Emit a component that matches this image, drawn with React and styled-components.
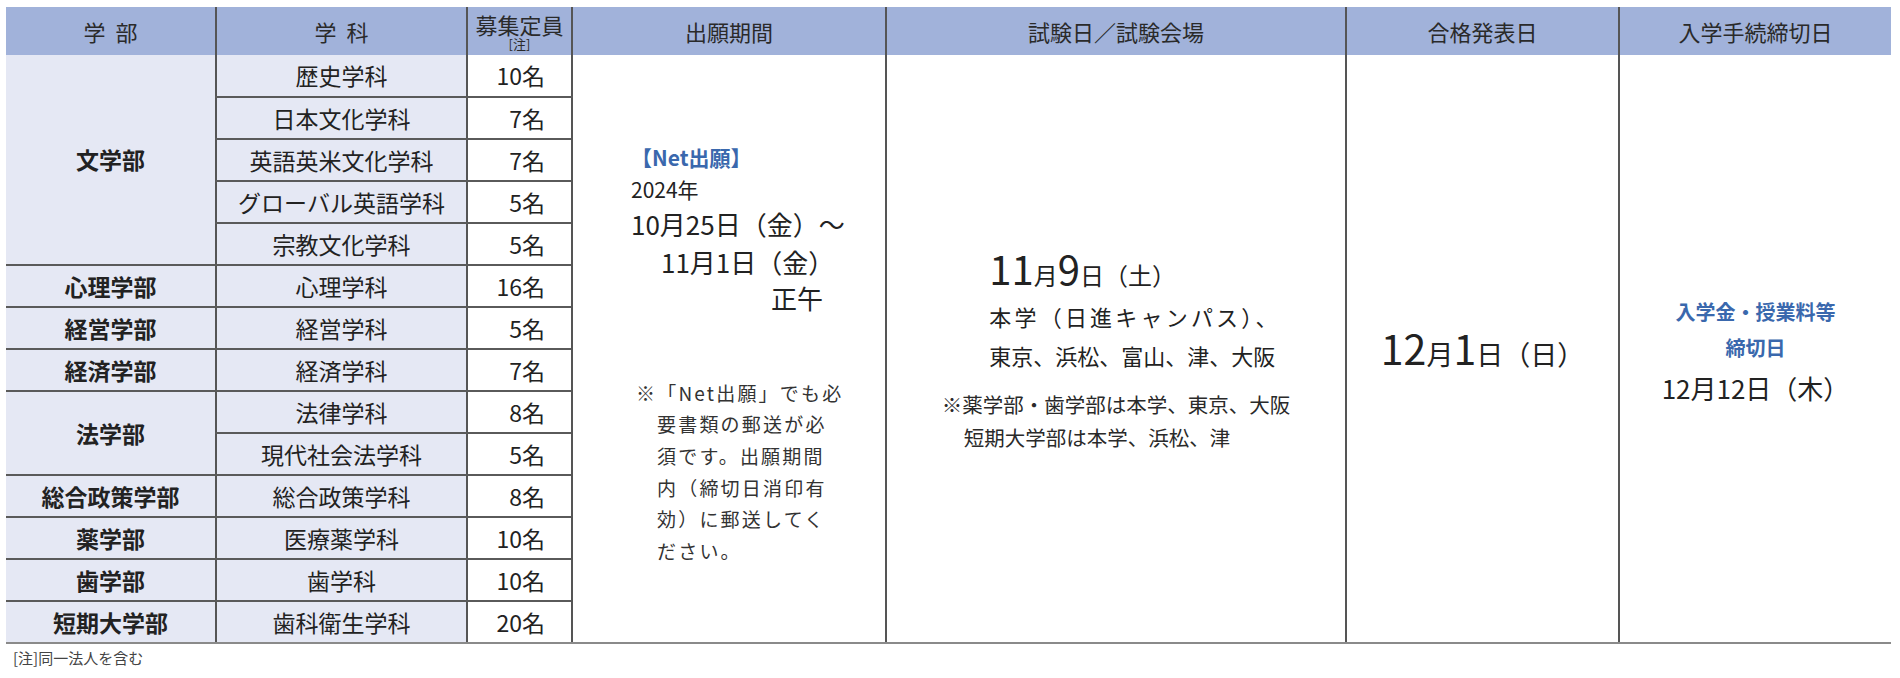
import React from 'react';
import styled, { createGlobalStyle } from 'styled-components';

const GlobalStyle = createGlobalStyle`
  body {
    margin: 0;
    background: #fff;
    font-family: "Noto Sans CJK JP", "Noto Sans", sans-serif;
    color: #222;
  }
`;

const Page = styled.div`
  padding: 7px 0 0 6px;
`;

const Table = styled.table`
  width: 1885px;
  table-layout: fixed;
  border-collapse: collapse;
`;

const Th = styled.th`
  height: 48px;
  padding: 0;
  background-color: #a1b2da;
  color: #2a2a2a;
  font-size: 22px;
  font-weight: 400;
  text-align: center;
  line-height: 24px;
  word-spacing: 5px;
  border-left: ${(props) => (props.first ? 'none' : '2px solid #555')};
`;

const Note = styled.span`
  display: block;
  font-size: 13px;
  line-height: 15px;
`;

const Row = styled.tr`
  height: 42px;
`;

const Td = styled.td`
  padding: 0;
  font-size: 23px;
  line-height: 1;
  text-align: center;
  background-color: ${(props) => (props.shade ? '#e5e8f4' : '#fff')};
  font-weight: ${(props) => (props.bold ? 700 : 400)};
  border-left: ${(props) => (props.first ? 'none' : '2px solid #555')};
  border-bottom: 2px solid ${(props) => (props.last ? '#8a8a8a' : '#5a5a5a')};
`;

const Count = styled(Td)`
  text-align: right;
  padding-right: 26px;
`;

const BigCell = styled.td`
  padding: 0;
  vertical-align: middle;
  border-left: 2px solid #555;
  border-bottom: 2px solid #8a8a8a;
  background: #fff;
`;

const ApplyBox = styled.div`
  padding: 10px 0 0 58px;
  text-align: left;
`;

const BlueLabel = styled.div`
  color: #3a68ad;
  font-weight: 700;
  font-size: ${(props) => props.size || 20}px;
  line-height: ${(props) => props.lh || 32}px;
`;

const Line = styled.div`
  font-size: ${(props) => props.size}px;
  line-height: ${(props) => props.lh}px;
  padding-left: ${(props) => props.indent || 0}px;
  letter-spacing: ${(props) => props.track || 0}px;
  white-space: nowrap;
`;

const ApplyNote = styled.div`
  margin-top: 62px;
  padding-left: 26px;
  text-indent: -21px;
  font-size: 19px;
  letter-spacing: 2.2px;
  line-height: 31.6px;
  color: #333;
`;

const ExamBox = styled.div`
  padding-top: 2px;
  text-align: center;
`;

const Venue = styled.div`
  display: inline-block;
  text-align: left;
  margin-left: 38px;
`;

const DateLine = styled.div`
  line-height: ${(props) => props.lh}px;
  font-size: ${(props) => props.small}px;
  white-space: nowrap;
`;

const Num = styled.span`
  font-size: ${(props) => props.size}px;
`;

const ExamNote = styled.div`
  display: inline-block;
  text-align: left;
  margin-top: 13px;
  padding-left: 22px;
  text-indent: -22px;
  font-size: 20.5px;
  line-height: 33px;
  color: #2a2a2a;
`;

const ResultBox = styled.div`
  padding-top: 4px;
  text-align: center;
`;

const DeadlineBox = styled.div`
  padding-top: 6px;
  text-align: center;
`;

const Footnote = styled.div`
  margin: 4px 0 0 7px;
  font-size: 15px;
  line-height: 20px;
  color: #444;
`;

const rows = [
  { dept: '文学部', span: 5, major: '歴史学科', count: '10名' },
  { major: '日本文化学科', count: '7名' },
  { major: '英語英米文化学科', count: '7名' },
  { major: 'グローバル英語学科', count: '5名' },
  { major: '宗教文化学科', count: '5名' },
  { dept: '心理学部', span: 1, major: '心理学科', count: '16名' },
  { dept: '経営学部', span: 1, major: '経営学科', count: '5名' },
  { dept: '経済学部', span: 1, major: '経済学科', count: '7名' },
  { dept: '法学部', span: 2, major: '法律学科', count: '8名' },
  { major: '現代社会法学科', count: '5名' },
  { dept: '総合政策学部', span: 1, major: '総合政策学科', count: '8名' },
  { dept: '薬学部', span: 1, major: '医療薬学科', count: '10名' },
  { dept: '歯学部', span: 1, major: '歯学科', count: '10名' },
  { dept: '短期大学部', span: 1, major: '歯科衛生学科', count: '20名' },
];

const widths = [210, 251, 105, 314, 460, 273, 272];

const App = () => {
  const lastIndex = rows.length - 1;
  return (
    <Page>
      <GlobalStyle />
      <Table>
        <colgroup>
          {widths.map((w, i) => (
            <col key={i} style={{ width: w }} />
          ))}
        </colgroup>
        <thead>
          <tr>
            <Th first>学 部</Th>
            <Th>学 科</Th>
            <Th>
              募集定員
              <Note>[注]</Note>
            </Th>
            <Th>出願期間</Th>
            <Th>試験日／試験会場</Th>
            <Th>合格発表日</Th>
            <Th>入学手続締切日</Th>
          </tr>
        </thead>
        <tbody>
          {rows.map((row, index) => (
            <Row key={row.major}>
              {row.dept && (
                <Td
                  first
                  shade
                  bold
                  rowSpan={row.span}
                  last={index + row.span - 1 === lastIndex}
                >
                  {row.dept}
                </Td>
              )}
              <Td shade last={index === lastIndex}>
                {row.major}
              </Td>
              <Count last={index === lastIndex}>{row.count}</Count>
              {index === 0 && (
                <>
                  <BigCell rowSpan={rows.length}>
                    <ApplyBox>
                      <BlueLabel size={21}>【Net出願】</BlueLabel>
                      <Line size={21} lh={32}>2024年</Line>
                      <Line size={26} lh={38}>10月25日（金）～</Line>
                      <Line size={26} lh={38} indent={30}>11月1日（金）</Line>
                      <Line size={26} lh={34} indent={140}>正午</Line>
                      <ApplyNote>
                        ※「Net出願」でも必<br />
                        要書類の郵送が必<br />
                        須です。出願期間<br />
                        内（締切日消印有<br />
                        効）に郵送してく<br />
                        ださい。
                      </ApplyNote>
                    </ApplyBox>
                  </BigCell>
                  <BigCell rowSpan={rows.length}>
                    <ExamBox>
                      <Venue>
                        <DateLine small={24} lh={44}>
                          <Num size={40}>11</Num>月<Num size={40}>9</Num>日（土）
                        </DateLine>
                        <Line size={22} lh={39} track={3.2}>本学（日進キャンパス）、</Line>
                        <Line size={22} lh={39}>東京、浜松、富山、津、大阪</Line>
                      </Venue>
                      <br />
                      <ExamNote>
                        ※薬学部・歯学部は本学、東京、大阪<br />
                        短期大学部は本学、浜松、津
                      </ExamNote>
                    </ExamBox>
                  </BigCell>
                  <BigCell rowSpan={rows.length}>
                    <ResultBox>
                      <DateLine small={27} lh={50}>
                        <Num size={41}>12</Num>月<Num size={41}>1</Num>日（日）
                      </DateLine>
                    </ResultBox>
                  </BigCell>
                  <BigCell rowSpan={rows.length}>
                    <DeadlineBox>
                      <BlueLabel lh={36}>入学金・授業料等</BlueLabel>
                      <BlueLabel lh={36}>締切日</BlueLabel>
                      <Line size={26} lh={44}>12月12日（木）</Line>
                    </DeadlineBox>
                  </BigCell>
                </>
              )}
            </Row>
          ))}
        </tbody>
      </Table>
      <Footnote>[注]同一法人を含む</Footnote>
    </Page>
  );
};

export default App;
